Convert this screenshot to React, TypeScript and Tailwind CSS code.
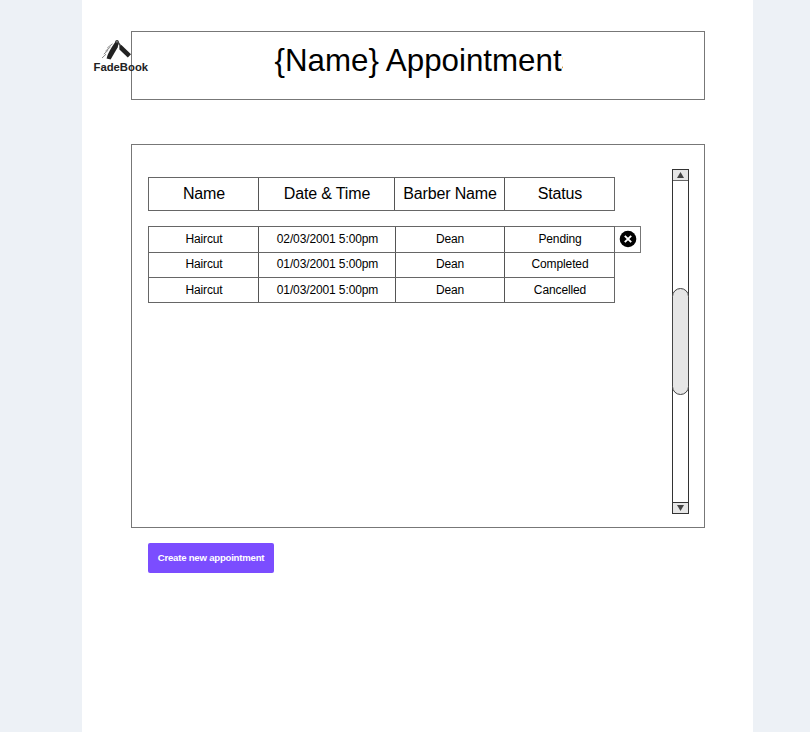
type Appointment = {
  name: string;
  date: string;
  barber: string;
  status: string;
  cancellable?: boolean;
};

const appointments: Appointment[] = [
  { name: "Haircut", date: "02/03/2001 5:00pm", barber: "Dean", status: "Pending", cancellable: true },
  { name: "Haircut", date: "01/03/2001 5:00pm", barber: "Dean", status: "Completed" },
  { name: "Haircut", date: "01/03/2001 5:00pm", barber: "Dean", status: "Cancelled" },
];

const rowStyles = [
  "flex h-[26px] leading-[24px]",
  "flex h-[25px] leading-[22px]",
  "flex h-[26px] leading-[24px]",
];

function Logo() {
  return (
    <div className="absolute left-[11px] top-[38px] w-[56px]">
      <svg className="ml-[8px] block" width="32" height="24" viewBox="0 0 32 24">
        <path d="M14.6 3.6 17.6 5.4 16.6 9.4 9.6 21.4 5.6 20.4Q6.5 15 14.6 3.6Z" fill="#222" />
        <path d="M16 3 19.4 7.4" stroke="#444" strokeWidth="1.6" />
        <path d="M18.4 7.6 20.4 7 30 16.2 26.8 19.4 18.4 11.6Z" fill="#222" />
        <circle cx="16" cy="3.7" r="1.8" fill="#333" />
        <circle cx="16" cy="3.8" r=".6" fill="#ddd" />
        <path
          d="M11.5 5.8 6.3 9.9M9.5 8.9 4.4 13.2M7.3 12 2.8 16.2M5 16.2 1 20"
          stroke="#555"
          strokeWidth=".7"
        />
      </svg>
      <div className="-mt-px ml-[0.5px] whitespace-nowrap text-[11.3px] font-bold leading-[12px] text-[#222]">FadeBook</div>
    </div>
  );
}

function CancelButton() {
  return (
    <button
      className="-mb-px flex w-[26px] items-center justify-center self-stretch border-y border-r border-[#777] pb-px"
      aria-label="Cancel"
    >
      <svg width="18" height="18" viewBox="0 0 18 18">
        <circle cx="9" cy="9" r="8.3" fill="#000" />
        <path d="m5.8 5.8 6.4 6.4m0-6.4-6.4 6.4" stroke="#fff" strokeWidth="1.9" />
      </svg>
    </button>
  );
}

function Scrollbar() {
  return (
    <div className="flex h-[345px] w-[17px] flex-col border border-[#333]">
      <div className="flex h-[11px] shrink-0 items-center justify-center border-b border-[#666] bg-[#e6e6e6]">
        <svg width="7" height="6" viewBox="0 0 7 6">
          <path d="M3.5 0 7 6H0Z" fill="#444" />
        </svg>
      </div>
      <div className="-mx-px mt-[107px] h-[107px] shrink-0 rounded-[8.5px] border border-[#444] bg-[#e6e6e6]" />
      <div className="mt-auto flex h-[11px] shrink-0 items-center justify-center border-t border-[#333] bg-[#e6e6e6]">
        <svg width="7" height="6" viewBox="0 0 7 6">
          <path d="M3.5 6 7 0H0Z" fill="#444" />
        </svg>
      </div>
    </div>
  );
}

export default function App() {
  return (
    <div className="h-[732px] w-[810px] overflow-hidden bg-[#edf1f6] font-['Liberation_Sans',Arial,sans-serif] text-black">
      <main className="relative ml-[82px] flex h-full w-[671px] flex-col bg-white pl-[49px]">
        <header className="mt-[31px] flex h-[69px] w-[574px] shrink-0 justify-center border border-[#777] pt-[11px]">
          <h1 className="w-[289px] overflow-hidden whitespace-nowrap pl-px text-[31.3px] leading-[36px]">
            {"{Name} Appointments"}
          </h1>
        </header>
        <Logo />

        <section className="mt-[44px] flex h-[384px] w-[574px] shrink-0 justify-between border border-[#777] pl-4 pr-[15px]">
          <div className="pt-[32px]">
            <div className="flex h-[34px] w-[467px] border border-[#666] text-center text-base leading-[31px] tracking-[-0.16px]">
              <div className="w-[109px] pl-px">Name</div>
              <div className="w-[137px] border-x border-[#555] pl-px">Date &amp; Time</div>
              <div className="w-[109px] pl-px">Barber Name</div>
              <div className="w-[110px] border-l border-[#555] pl-px">Status</div>
            </div>
            <div className="mt-[15px] text-center text-xs tracking-[-0.12px]">
              {appointments.map((item, index) => (
                <div key={index} className={rowStyles[index]}>
                  <div className={index === 2 ? "flex w-[467px] border border-[#666]" : "flex w-[467px] border border-b-0 border-[#666]"}>
                    <div className="w-[109px] pl-px">{item.name}</div>
                    <div className="w-[138px] border-x border-[#555] pl-px">{item.date}</div>
                    <div className="w-[108px]">{item.barber}</div>
                    <div className="w-[110px] border-l border-[#555] pl-px">{item.status}</div>
                  </div>
                  {item.cancellable && <CancelButton />}
                </div>
              ))}
            </div>
          </div>
          <div className="pt-[24px]">
            <Scrollbar />
          </div>
        </section>

        <button className="ml-[17px] mt-[15px] h-[30px] w-[126px] shrink-0 whitespace-nowrap rounded-[2px] bg-[#7b4dff] text-[9.6px] font-bold tracking-[-0.22px] text-white">
          Create new appointment
        </button>
      </main>
    </div>
  );
}
